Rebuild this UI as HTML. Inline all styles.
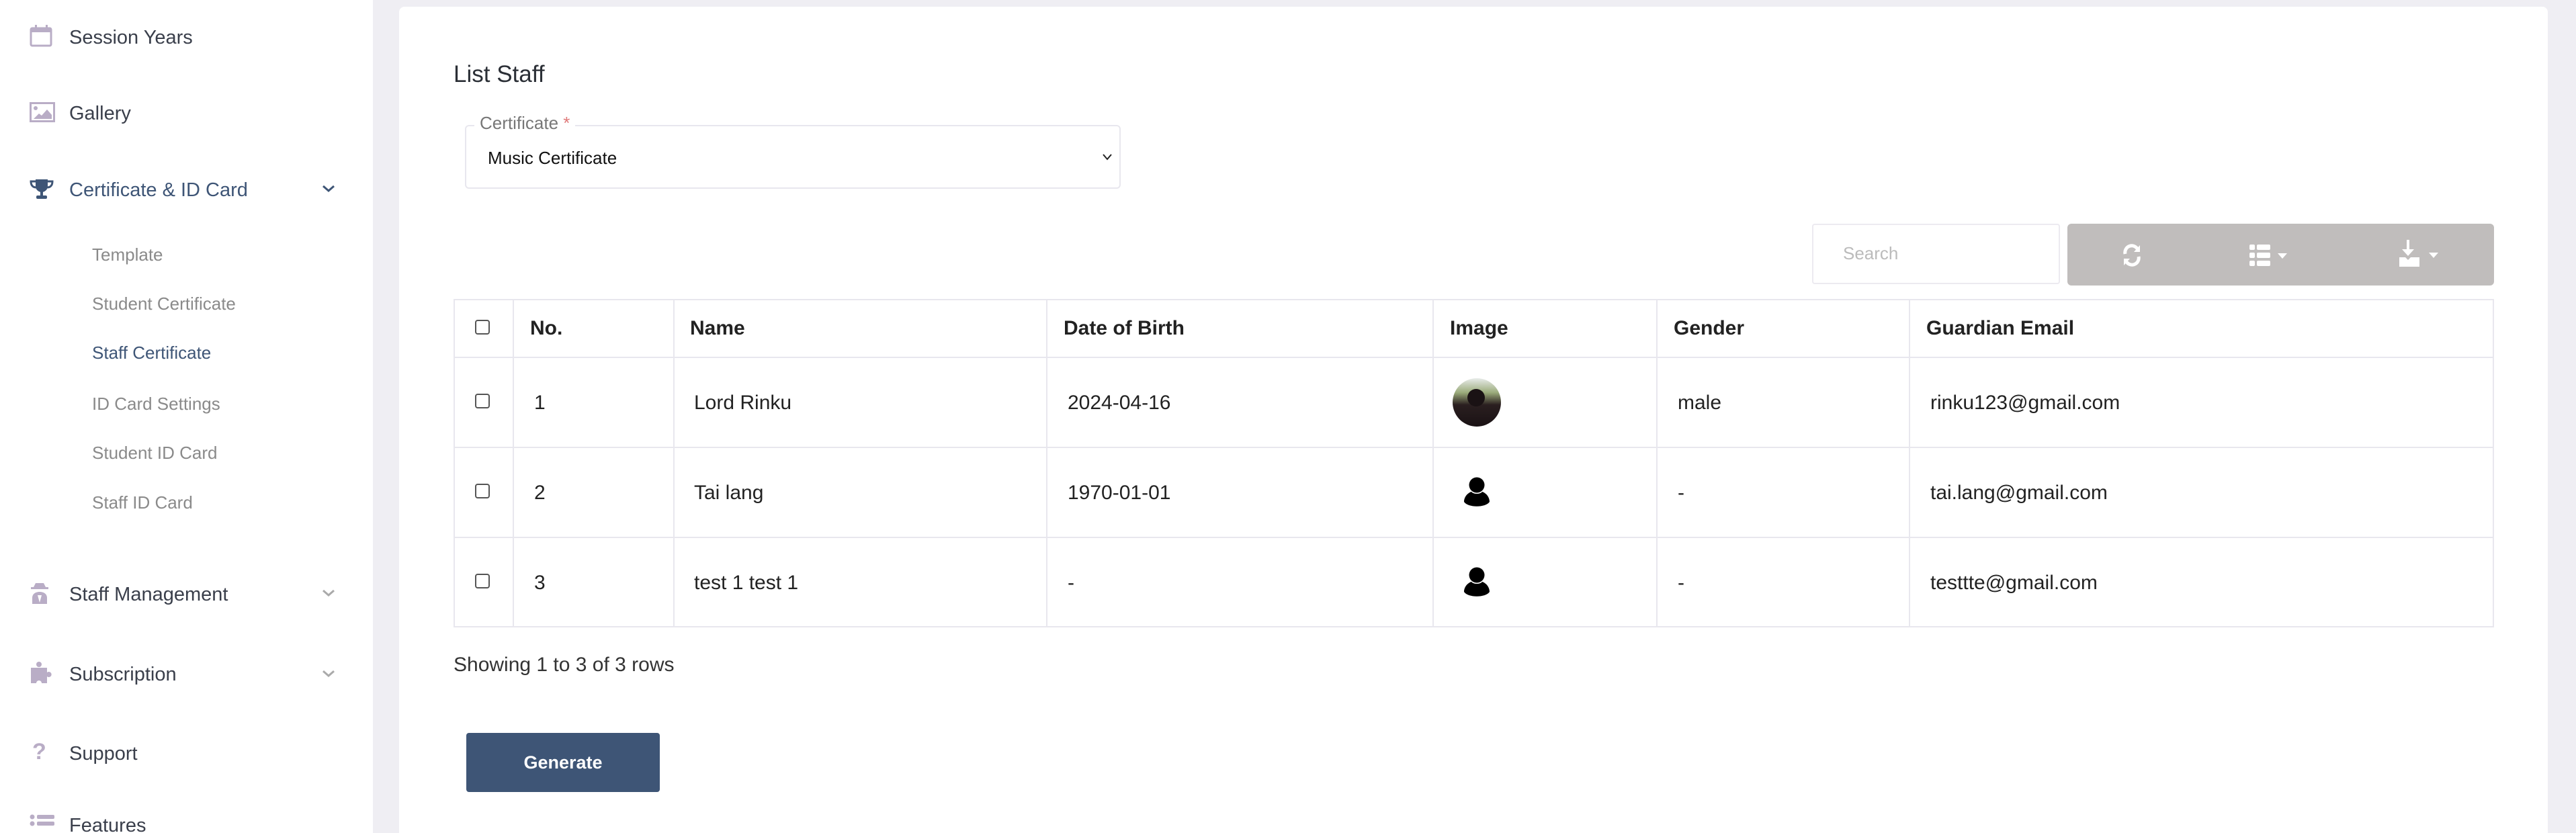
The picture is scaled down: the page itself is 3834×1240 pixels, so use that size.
<!DOCTYPE html>
<html style="overflow:hidden;width:3834px;height:1240px"><head><meta charset="utf-8"><style>
*{margin:0;padding:0;box-sizing:border-box}
body{width:3834px;height:1240px;background:#efeef3;font-family:"Liberation Sans",sans-serif;position:relative;overflow:hidden;color:#2b2f36}
.sb{position:absolute;left:0;top:0;width:555px;height:1240px;background:#fff}
.a{position:absolute;white-space:nowrap}
.mi{font-size:29px;color:#3a3f4b;left:103px;line-height:36px}
.si{font-size:26px;color:#8a8a8a;left:137px;line-height:32px}
.ic{position:absolute;left:44px}
.chev{position:absolute;left:478px;width:22px;height:22px}
.card{position:absolute;left:594px;top:10px;width:3198px;height:1230px;background:#fff;border-radius:8px 8px 0 0}
.tbl{position:absolute;left:675px;top:445px;width:3037px;height:489px;border:2px solid #e8e7ee}
.hl{position:absolute;left:0;width:100%;height:2px;background:#e8e7ee}
.vl{position:absolute;top:0;height:100%;width:2px;background:#e8e7ee}
.cb{position:absolute;left:707px;width:22px;height:22px;border:2px solid #555;border-radius:4px;background:#fff}
.td{font-size:30px;color:#222;line-height:36px}
.th{font-size:30px;font-weight:bold;color:#222;line-height:36px}
</style></head><body>
<div class="sb"></div>
<svg class="ic" style="top:36px" width="36" height="36" viewBox="0 0 36 36"><rect x="2" y="6" width="30" height="26" rx="2" fill="none" stroke="#b9adc6" stroke-width="3"/><rect x="2" y="6" width="30" height="6" fill="#b9adc6"/><rect x="8" y="1" width="3" height="8" fill="#b9adc6"/><rect x="24" y="1" width="3" height="8" fill="#b9adc6"/></svg>
<div class="a mi" style="top:38px">Session Years</div>
<svg class="ic" style="top:152px" width="38" height="30" viewBox="0 0 38 30"><rect x="1.5" y="1.5" width="35" height="27" fill="none" stroke="#b9adc6" stroke-width="3"/><circle cx="9" cy="9" r="3" fill="#b9adc6"/><path d="M6 25 L14 17 L18 20 L26 11 L33 19 L33 25Z" fill="#b9adc6"/></svg>
<div class="a mi" style="top:151px">Gallery</div>
<svg class="ic" style="top:265px" width="36" height="32" viewBox="0 0 36 32"><path d="M9 2 H27 V12 C27 18 22 21 18 21 C14 21 9 18 9 12Z" fill="#3e5576"/><path d="M9 5 H2 C2 12 6 14 10 14 M27 5 H34 C34 12 30 14 26 14" fill="none" stroke="#3e5576" stroke-width="3"/><rect x="16" y="20" width="4" height="6" fill="#3e5576"/><rect x="10" y="26" width="16" height="5" rx="2" fill="#3e5576"/></svg>
<div class="a mi" style="top:265px;color:#3e5576">Certificate &amp; ID Card</div>
<svg class="chev" style="top:270px" viewBox="0 0 22 22"><path d="M3 7 L11 14 L19 7" fill="none" stroke="#3e5576" stroke-width="3"/></svg>
<div class="a si" style="top:363px">Template</div>
<div class="a si" style="top:436px">Student Certificate</div>
<div class="a si" style="top:509px;color:#3e5576">Staff Certificate</div>
<div class="a si" style="top:585px">ID Card Settings</div>
<div class="a si" style="top:658px">Student ID Card</div>
<div class="a si" style="top:732px">Staff ID Card</div>
<svg class="ic" style="top:866px" width="30" height="34" viewBox="0 0 30 34"><path d="M6 8 L9 2 H21 L24 8Z" fill="#b9adc6"/><rect x="2" y="8" width="26" height="3" fill="#b9adc6"/><path d="M4 33 V24 C4 18 9 15 15 15 C21 15 26 18 26 24 V33Z" fill="#b9adc6"/><path d="M12 20 L15 31 L18 20Z" fill="#fff"/></svg>
<div class="a mi" style="top:867px">Staff Management</div>
<svg class="chev" style="top:872px" viewBox="0 0 22 22"><path d="M3 7 L11 14 L19 7" fill="none" stroke="#aaa" stroke-width="3"/></svg>
<svg class="ic" style="top:984px" width="36" height="34" viewBox="0 0 36 34"><circle cx="14" cy="5" r="4" fill="#b9adc6"/><path d="M2 10 H26 V17 A4 4 0 1 1 26 23 V33 H18 A4 4 0 1 0 10 33 H2Z" fill="#b9adc6"/></svg>
<div class="a mi" style="top:986px">Subscription</div>
<svg class="chev" style="top:992px" viewBox="0 0 22 22"><path d="M3 7 L11 14 L19 7" fill="none" stroke="#aaa" stroke-width="3"/></svg>
<div class="a" style="left:48px;top:1100px;font-size:34px;font-weight:bold;color:#b9adc6">?</div>
<div class="a mi" style="top:1104px">Support</div>
<svg class="ic" style="top:1212px" width="38" height="28" viewBox="0 0 38 28"><circle cx="4" cy="4" r="3.5" fill="#b9adc6"/><circle cx="4" cy="14" r="3.5" fill="#b9adc6"/><rect x="11" y="1" width="26" height="6" rx="2" fill="#b9adc6"/><rect x="11" y="11" width="26" height="6" rx="2" fill="#b9adc6"/></svg>
<div class="a mi" style="top:1211px">Features</div>

<div class="card"></div>
<div class="a" style="left:675px;top:91px;font-size:35px;color:#2b2f36;line-height:40px">List Staff</div>
<div class="a" style="left:692px;top:186px;width:976px;height:95px;border:2px solid #e8e7ee;border-radius:6px;background:#fff"></div>
<div class="a" style="left:706px;top:168px;background:#fff;padding:0 8px;font-size:26px;color:#777;line-height:30px">Certificate <span style="color:#e07a7a">*</span></div>
<div class="a" style="left:726px;top:219px;font-size:26px;color:#111;line-height:32px">Music Certificate</div>
<svg class="a" style="left:1641px;top:226px" width="14" height="14" viewBox="0 0 14 14"><path d="M1 4 L7 11 L13 4" fill="none" stroke="#222" stroke-width="2"/></svg>

<div class="a" style="left:2697px;top:333px;width:369px;height:90px;border:2px solid #eceaf0;border-radius:4px;background:#fff"></div>
<div class="a" style="left:2743px;top:361px;font-size:26px;color:#bbb;line-height:32px">Search</div>
<div class="a" style="left:3077px;top:333px;width:635px;height:92px;background:#c0bdbc;border-radius:6px"></div>
<svg class="a" style="left:3158px;top:362px" width="30" height="36" viewBox="0 0 30 36"><path d="M5 16 A10 10 0 0 1 24 10 M25 20 A10 10 0 0 1 6 26" fill="none" stroke="#fff" stroke-width="5"/><path d="M27 3 V13 H18Z M3 33 V23 H12Z" fill="#fff"/></svg>
<svg class="a" style="left:3348px;top:362px" width="56" height="36" viewBox="0 0 56 36"><rect x="0" y="2" width="8" height="8" rx="2" fill="#fff"/><rect x="11" y="2" width="20" height="8" rx="2" fill="#fff"/><rect x="0" y="14" width="8" height="8" rx="2" fill="#fff"/><rect x="11" y="14" width="20" height="8" rx="2" fill="#fff"/><rect x="0" y="26" width="8" height="8" rx="2" fill="#fff"/><rect x="11" y="26" width="20" height="8" rx="2" fill="#fff"/><path d="M42 15 H56 L49 23Z" fill="#fff"/></svg>
<svg class="a" style="left:3571px;top:357px" width="60" height="42" viewBox="0 0 60 42"><rect x="11" y="0" width="4" height="16" fill="#fff"/><path d="M4 14 H22 L13 24Z" fill="#fff"/><path d="M0 26 H9 L13 30 L17 26 H30 V40 H0Z" fill="#fff"/><path d="M44 19 H58 L51 27Z" fill="#fff"/></svg>

<div class="tbl">
<div class="hl" style="top:84px"></div><div class="hl" style="top:218px"></div><div class="hl" style="top:352px"></div>
<div class="vl" style="left:86px"></div><div class="vl" style="left:325px"></div><div class="vl" style="left:880px"></div><div class="vl" style="left:1455px"></div><div class="vl" style="left:1788px"></div><div class="vl" style="left:2164px"></div>
</div>
<div class="cb" style="top:476px"></div>
<div class="cb" style="top:586px"></div>
<div class="cb" style="top:720px"></div>
<div class="cb" style="top:854px"></div>
<div class="a th" style="left:789px;top:471px">No.</div>
<div class="a th" style="left:1027px;top:471px">Name</div>
<div class="a th" style="left:1583px;top:471px">Date of Birth</div>
<div class="a th" style="left:2158px;top:471px">Image</div>
<div class="a th" style="left:2491px;top:471px">Gender</div>
<div class="a th" style="left:2867px;top:471px">Guardian Email</div>

<div class="a td" style="left:795px;top:582px">1</div>
<div class="a td" style="left:1033px;top:582px">Lord Rinku</div>
<div class="a td" style="left:1589px;top:582px">2024-04-16</div>
<div class="a" style="left:2162px;top:563px;width:72px;height:72px;border-radius:50%;overflow:hidden;background:linear-gradient(#e8ecea 0,#9aaa7a 30%,#2a1f20 55%,#1a1214 100%)"><div style="position:absolute;left:22px;top:16px;width:26px;height:26px;border-radius:50%;background:#1a1214"></div></div>
<div class="a td" style="left:2497px;top:582px">male</div>
<div class="a td" style="left:2873px;top:582px">rinku123@gmail.com</div>

<div class="a td" style="left:795px;top:716px">2</div>
<div class="a td" style="left:1033px;top:716px">Tai lang</div>
<div class="a td" style="left:1589px;top:716px">1970-01-01</div>
<svg class="a" style="left:2178px;top:710px" width="40" height="46" viewBox="0 0 40 46"><circle cx="20" cy="12" r="11.5"/><path d="M1 37 C1 30 6 24 12 22 C15 26 25 26 28 22 C34 24 39 30 39 37 C33 46 7 46 1 37Z"/></svg>
<div class="a td" style="left:2497px;top:716px">-</div>
<div class="a td" style="left:2873px;top:716px">tai.lang@gmail.com</div>

<div class="a td" style="left:795px;top:850px">3</div>
<div class="a td" style="left:1033px;top:850px">test 1 test 1</div>
<div class="a td" style="left:1589px;top:850px">-</div>
<svg class="a" style="left:2178px;top:844px" width="40" height="46" viewBox="0 0 40 46"><circle cx="20" cy="12" r="11.5"/><path d="M1 37 C1 30 6 24 12 22 C15 26 25 26 28 22 C34 24 39 30 39 37 C33 46 7 46 1 37Z"/></svg>
<div class="a td" style="left:2497px;top:850px">-</div>
<div class="a td" style="left:2873px;top:850px">testtte@gmail.com</div>

<div class="a" style="left:675px;top:972px;font-size:30px;color:#333;line-height:36px">Showing 1 to 3 of 3 rows</div>
<div class="a" style="left:694px;top:1091px;width:288px;height:88px;background:#3e5576;border-radius:4px;color:#fff;font-size:27px;font-weight:bold;text-align:center;line-height:88px">Generate</div>
</body></html>
